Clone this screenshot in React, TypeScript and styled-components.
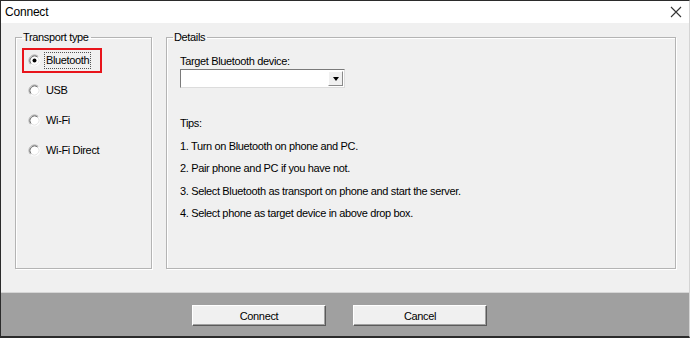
import React from "react";
import styled, { createGlobalStyle } from "styled-components";

const Global = createGlobalStyle`
  html, body { margin: 0; padding: 0; background: #a0a0a0; }
  * { box-sizing: border-box; }
`;

const Window = styled.div`
  width: 690px;
  height: 338px;
  display: flex;
  flex-direction: column;
  border-top: 1px solid #2b2b2b;
  border-left: 1px solid #2b2b2b;
  border-bottom: 2px solid #2b2b2b;
  border-right: 1px solid #d4d4d4;
  font-family: "Liberation Sans", Arial, sans-serif;
  font-size: 11px;
  letter-spacing: -0.35px;
  color: #000;
  background: #f0f0f0;
`;

const TitleBar = styled.div`
  height: 22px;
  flex: none;
  background: #fff;
  display: flex;
  align-items: center;
  justify-content: space-between;
  padding: 0 7px 0 4px;
  font-family: "Liberation Sans", Arial, sans-serif;
  font-size: 12px;
  letter-spacing: -0.2px;
  color: #000;
`;

const CloseIcon = styled.svg`
  width: 12px;
  height: 12px;
  display: block;
`;

const Content = styled.div`
  flex: 1;
  display: flex;
  gap: 14px;
  padding: 8px 13px 23px 14px;
  background: #f0f0f0;
`;

const Group = styled.fieldset<{ $w: number }>`
  width: ${(p) => p.$w}px;
  flex: none;
  margin: 0;
  padding: 0;
  min-width: 0;
  border: 1px solid #b4b4b4;
  box-shadow: inset 1px 1px 0 #fff, 1px 1px 0 #fff;
  display: flex;
  flex-direction: column;
`;

const Legend = styled.legend`
  margin-left: 6px;
  padding: 0 2px 0 1px;
  line-height: 13px;
  font-size: 11px;
`;

const RadioList = styled.div`
  display: flex;
  flex-direction: column;
  align-items: flex-start;
  gap: 9px;
  padding: 6px 0 0 8px;
`;

const RadioRow = styled.label<{ $marked?: boolean }>`
  display: flex;
  align-items: center;
  height: 21px;
  width: ${(p) => (p.$marked ? "76px" : "auto")};
  padding-left: 4px;
  gap: 3px;
  outline: ${(p) => (p.$marked ? "2px solid #e8141b" : "none")};
  white-space: nowrap;
  svg { flex: none; }
`;

const RadioText = styled.span<{ $focus?: boolean }>`
  padding: 1px 1px;
  line-height: 13px;
  border: 1px dotted ${(p) => (p.$focus ? "#555" : "transparent")};
`;

const Details = styled.div`
  display: flex;
  flex-direction: column;
  align-items: flex-start;
  padding: 11px 0 0 13px;
`;

const Label = styled.div`
  line-height: 13px;
`;

const Select = styled.div`
  margin-top: 1px;
  width: 165px;
  height: 19px;
  background: #fff;
  border: 1px solid;
  border-color: #7a7a7a #dcdcdc #dcdcdc #7a7a7a;
  display: flex;
  justify-content: flex-end;
  padding: 1px;
`;

const DropButton = styled.div`
  width: 15px;
  height: 100%;
  background: #f0f0f0;
  border: 1px solid;
  border-color: #fff #8a8a8a #8a8a8a #fff;
  display: flex;
  align-items: center;
  justify-content: center;
`;

const Arrow = styled.div`
  width: 0;
  height: 0;
  border-left: 3.5px solid transparent;
  border-right: 3.5px solid transparent;
  border-top: 4px solid #000;
  margin-top: 1px;
`;

const Tips = styled.div`
  margin-top: 29px;
  display: flex;
  flex-direction: column;
  gap: 9.5px;
  line-height: 13px;
`;

const Footer = styled.div`
  height: 44px;
  flex: none;
  background: #a0a0a0;
  border-top: 1px solid #d6d6d6;
  display: flex;
  align-items: flex-start;
  gap: 27px;
  padding: 12px 0 0 191px;
`;

const Button = styled.button`
  width: 134px;
  height: 21px;
  margin: 0;
  padding: 0;
  background: #f0f0f0;
  border: 1px solid;
  border-color: #fff #5a5a5a #5a5a5a #fff;
  box-shadow: inset -1px -1px 0 #a0a0a0;
  font-family: "Liberation Sans", Arial, sans-serif;
  font-size: 11px;
  letter-spacing: -0.35px;
  color: #000;
`;

const RadioIcon = ({ checked }: { checked?: boolean }) => (
  <svg width="13" height="13" viewBox="0 0 13 13">
    <circle cx="6.5" cy="6.5" r="5.5" fill="#fff" />
    <path d="M2.61 10.39 A5.5 5.5 0 0 1 10.39 2.61" fill="none" stroke="#a0a0a0" />
    <path d="M10.39 2.61 A5.5 5.5 0 0 1 2.61 10.39" fill="none" stroke="#fff" />
    <path d="M3.32 9.68 A4.5 4.5 0 0 1 9.68 3.32" fill="none" stroke="#696969" />
    <path d="M9.68 3.32 A4.5 4.5 0 0 1 3.32 9.68" fill="none" stroke="#e3e3e3" />
    {checked && <circle cx="6.5" cy="6.5" r="2" fill="#000" />}
  </svg>
);

const transports = ["Bluetooth", "USB", "Wi-Fi", "Wi-Fi Direct"];
const tips = [
  "Tips:",
  "1. Turn on Bluetooth on phone and PC.",
  "2. Pair phone and PC if you have not.",
  "3. Select Bluetooth as transport on phone and start the server.",
  "4. Select phone as target device in above drop box.",
];

export default function App() {
  return (
    <>
      <Global />
      <Window>
        <TitleBar>
          <span>Connect</span>
          <CloseIcon viewBox="0 0 12 12">
            <path d="M1 1 L11 11 M11 1 L1 11" stroke="#333" strokeWidth="1.1" fill="none" />
          </CloseIcon>
        </TitleBar>
        <Content>
          <Group $w={137}>
            <Legend>Transport type</Legend>
            <RadioList>
              {transports.map((t, i) => (
                <RadioRow key={t} $marked={i === 0}>
                  <RadioIcon checked={i === 0} />
                  <RadioText $focus={i === 0}>{t}</RadioText>
                </RadioRow>
              ))}
            </RadioList>
          </Group>
          <Group $w={510}>
            <Legend>Details</Legend>
            <Details>
              <Label>Target Bluetooth device:</Label>
              <Select>
                <DropButton>
                  <Arrow />
                </DropButton>
              </Select>
              <Tips>
                {tips.map((t) => (
                  <div key={t}>{t}</div>
                ))}
              </Tips>
            </Details>
          </Group>
        </Content>
        <Footer>
          <Button>Connect</Button>
          <Button>Cancel</Button>
        </Footer>
      </Window>
    </>
  );
}
